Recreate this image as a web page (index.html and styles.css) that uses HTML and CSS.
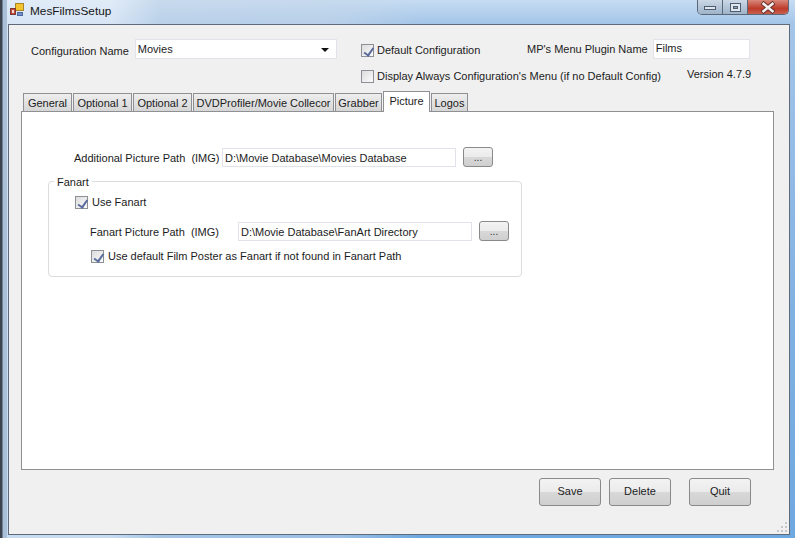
FILE: index.html
```html
<!DOCTYPE html>
<html lang="en">
<head>
<meta charset="utf-8">
<title>MesFilmsSetup</title>
<link rel="stylesheet" href="styles.css">
</head>
<body>
<div class="window">
  <div class="titlebar">
    <svg class="app-icon" width="16" height="16" viewBox="0 0 16 16">
      <rect x="6.5" y="1.5" width="8" height="7" fill="#f4c430" stroke="#a8842a"/>
      <rect x="1.5" y="6.5" width="5" height="6" fill="#c8483c" stroke="#7c3a36"/>
      <rect x="3" y="8" width="2" height="3" fill="#f2d8d0"/>
      <rect x="8.5" y="10.5" width="5" height="3" fill="#6f8fd0" stroke="#51689a"/>
    </svg>
    <span class="title">MesFilmsSetup</span>
    <div class="caption-buttons">
      <div class="cap cap-min"><svg width="14" height="8" viewBox="0 0 14 8"><rect x="1.5" y="3.5" width="11" height="3" fill="#dfe6ee" stroke="#4d5c6e"/></svg></div>
      <div class="cap cap-max"><svg width="13" height="11" viewBox="0 0 13 11"><rect x="1.5" y="1.5" width="10" height="8" fill="#dfe6ee" stroke="#4d5c6e"/><rect x="4.5" y="4.5" width="4" height="2" fill="#8ea2b8" stroke="#4d5c6e"/></svg></div>
      <div class="cap cap-close"><svg width="18" height="13" viewBox="0 0 18 13"><path d="M3 1.5 L15 11.5 M15 1.5 L3 11.5" stroke="#5c2a26" stroke-width="4.4"/><path d="M3.5 2 L14.5 11 M14.5 2 L3.5 11" stroke="#f4eeee" stroke-width="2.6"/></svg></div>
    </div>
  </div>
  <div class="client">
    <div class="config">
      <div class="config-left">
        <span class="label">Configuration Name</span>
        <div class="combo"><span>Movies</span><span class="arrow"></span></div>
      </div>
      <div class="config-mid">
        <div class="check-row"><span class="check on"></span><span>Default Configuration</span></div>
        <div class="check-row"><span class="check"></span><span>Display Always Configuration's Menu (if no Default Config)</span></div>
      </div>
      <div class="config-right">
        <div class="plugin-row"><span>MP's Menu Plugin Name</span><div class="field plugin-field">Films</div></div>
        <div class="version">Version 4.7.9</div>
      </div>
    </div>
    <div class="tabs">
      <div class="tab tab-general">General</div>
      <div class="tab tab-opt">Optional 1</div>
      <div class="tab tab-opt">Optional 2</div>
      <div class="tab tab-dvd">DVDProfiler/Movie Collecor</div>
      <div class="tab tab-grabber">Grabber</div>
      <div class="tab tab-picture active">Picture</div>
      <div class="tab tab-logos">Logos</div>
    </div>
    <div class="panel">
      <div class="path-row path-main">
        <span class="path-label main-label">Additional Picture Path&nbsp; (IMG)</span>
        <div class="field path-field">D:\Movie Database\Movies Database</div>
        <div class="btn browse">...</div>
      </div>
      <div class="fanart">
        <div class="legend">Fanart</div>
        <div class="check-row use-fanart"><span class="check on"></span><span>Use Fanart</span></div>
        <div class="path-row path-fanart">
          <span class="path-label fanart-label">Fanart Picture Path&nbsp; (IMG)</span>
          <div class="field path-field">D:\Movie Database\FanArt Directory</div>
          <div class="btn browse">...</div>
        </div>
        <div class="check-row use-default"><span class="check on"></span><span>Use default Film Poster as Fanart if not found in Fanart Path</span></div>
      </div>
    </div>
    <div class="actions">
      <div class="btn action">Save</div>
      <div class="btn action">Delete</div>
      <div class="btn action quit">Quit</div>
    </div>
    <svg class="grip" width="12" height="12" viewBox="0 0 12 12"><path d="M9 1h2v2H9zM5 5h2v2H5zM9 5h2v2H9zM1 9h2v2H1zM5 9h2v2H5zM9 9h2v2H9z" fill="#c4c8cc"/></svg>
  </div>
</div>
</body>
</html>
```
FILE: styles.css
```css
* { box-sizing: border-box; }
html, body { margin: 0; padding: 0; }
body { width: 795px; height: 538px; overflow: hidden; font-family: "Liberation Sans", Arial, sans-serif; font-size: 11px; color: #1c1c1c; }

.window {
  width: 795px; height: 538px; padding: 0 5px 3px 8px; display: flex; flex-direction: column;
  background:
    linear-gradient(90deg, #3c4450 0, #3c4450 2px, #a9c0d8 3px, #a9c0d8 7px, transparent 7px),
    linear-gradient(90deg, rgba(236,242,250,.7) 0, rgba(236,242,250,.7) 110px, rgba(200,216,234,.6) 160px, rgba(200,216,234,.5) 340px, transparent 420px),
    linear-gradient(180deg, #c6dcf2 0, #a4c5e8 24px, #7fb0e2 60%, #6ea8e0 100%);
  background-color: #c3d9f0;
}
.titlebar { height: 24px; flex: none; display: flex; align-items: flex-start; position: relative; }
.app-icon { margin: 2px 0 0 1px; }
.title { margin: 3px 0 0 5px; font-size: 11.8px; line-height: 16px; color: #161616; }
.caption-buttons {
  margin-left: auto; margin-right: 1px; width: 92px; height: 15px; display: flex;
  border: 1px solid #5b6878; border-top: 0; border-radius: 0 0 5px 5px; overflow: hidden;
}
.cap { display: flex; align-items: center; justify-content: center; }
.cap-min { width: 25px; background: linear-gradient(180deg, #cbd8e6, #9fb3c8); border-right: 1px solid #5b6878; }
.cap-max { width: 25px; background: linear-gradient(180deg, #cbd8e6, #9fb3c8); border-right: 1px solid #5b6878; }
.cap-close { flex: 1; background: linear-gradient(180deg, #d9897c, #bd3b2a 60%, #c9604c); }

.client {
  flex: 1; position: relative; background: #f0f0f0; border: 1px solid #5f6b7a;
  padding: 0 0 0 12px; display: flex; flex-direction: column;
}

.config { height: 67px; flex: none; display: flex; align-items: flex-start; padding: 14px 0 0 10px; }
.label { line-height: 20px; margin-top: 2px; }
.config-left { display: flex; width: 330px; }
.combo {
  width: 202px; height: 20px; margin: 0 0 0 6px; background: #fff; border: 1px solid #e2e3ea;
  display: flex; justify-content: space-between; align-items: center; padding: 0 4px 0 2px;
}
.arrow { width: 0; height: 0; border: 4px solid transparent; border-top: 4px solid #111; border-bottom: 0; margin: 2px 3px 0 0; }
.config-mid { width: 166px; padding-top: 4px; display: flex; flex-direction: column; gap: 12px; white-space: nowrap; }
.check-row { display: flex; align-items: center; height: 14px; gap: 4px; white-space: nowrap; }
.config-mid .check-row { gap: 3px; }
.check { width: 13px; height: 13px; flex: none; border: 1px solid #8c8f94; background: linear-gradient(135deg, #dcdcdc, #fbfbfb); position: relative; }
.check.on::after {
  content: ""; position: absolute; left: 3.5px; top: 1px; width: 4px; height: 7.5px;
  border: solid #5a6c9e; border-width: 0 2px 2px 0; transform: rotate(35deg);
}
.config-right { flex: 1; display: flex; flex-direction: column; }
.plugin-row { display: flex; align-items: center; white-space: nowrap; }
.field { background: #fff; border: 1px solid #e2e3ea; height: 20px; line-height: 17px; padding-left: 2px; white-space: nowrap; }
.plugin-field { width: 97px; margin-left: 5px; }
.version { margin: 9px 0 0 160px; white-space: nowrap; }

.tabs { display: flex; height: 19px; flex: none; align-items: flex-end; padding-left: 2px; position: relative; z-index: 1; }
.tab {
  height: 18px; margin-right: 1px; border: 1px solid #8e9094; border-bottom: 0; text-align: center; line-height: 19px;
  background: linear-gradient(180deg, #eeeeee, #d6d6d6); white-space: nowrap;
}
.tab-general { width: 49px; }
.tab-opt { width: 59px; }
.tab-dvd { width: 141px; }
.tab-grabber { width: 47px; }
.tab-picture { width: 47px; }
.tab-logos { width: 37px; }
.tab.active { height: 21px; background: #fff; line-height: 19px; margin-bottom: -1px; padding-bottom: 2px; }

.panel { width: 753px; height: 359px; flex: none; background: #fff; border: 1px solid #8e9094; padding: 36px 0 0 26px; }
.path-row { display: flex; align-items: flex-start; white-space: nowrap; }
.path-main { margin-left: 26px; }
.path-label { line-height: 20px; }
.main-label { width: 148px; }
.path-field { width: 234px; height: 19px; line-height: 19px; }
.browse { margin-left: 7px; width: 30px; height: 20px; margin-top: -1px; font-size: 10px; line-height: 19px; }
.btn {
  border: 1px solid #8a8a8a; border-radius: 3px; text-align: center; color: #333;
  background: linear-gradient(180deg, #f3f3f3 0, #ebebeb 48%, #d8d8d8 52%, #cfcfcf 100%);
}
.fanart { position: relative; width: 474px; height: 96px; margin-top: 13px; border: 1px solid #dcdcdc; border-radius: 4px; }
.legend { position: absolute; left: 5px; top: -7px; background: #fff; padding: 0 3px; line-height: 14px; }
.use-fanart { margin: 13px 0 0 26px; }
.path-fanart { margin: 13px 0 0 41px; }
.fanart-label { width: 148px; }
.use-default { margin: 7px 0 0 42px; }

.actions { display: flex; height: 28px; margin-top: 8px; padding-left: 518px; flex: none; }
.action { width: 62px; height: 28px; line-height: 25px; margin-right: 8px; color: #1c1c1c; }
.action.quit { margin-left: 10px; }
.grip { position: absolute; right: 1px; bottom: 1px; }
```
